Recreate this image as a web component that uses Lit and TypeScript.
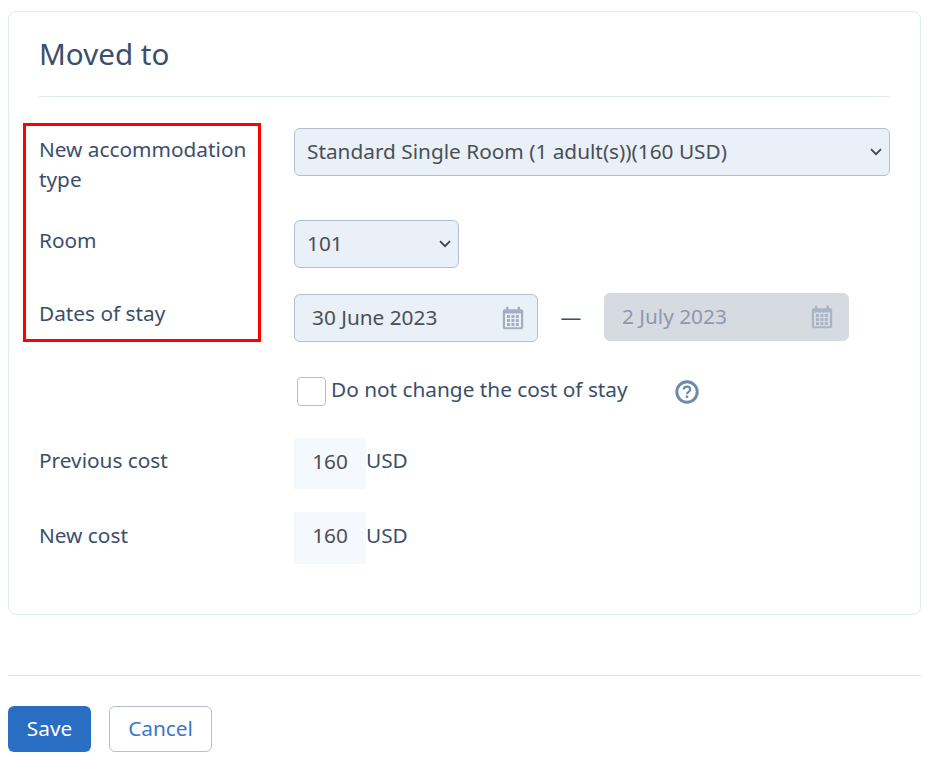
import { LitElement, html, css, svg } from "lit";
import { customElement } from "lit/decorators.js";

const chevron = html`<svg class="chev" width="12" height="8" viewBox="0 0 12 8"><path d="M1 1.2l5 5 5-5" fill="none" stroke="#3c4650" stroke-width="1.8"/></svg>`;
const cal = (c: string) => html`<svg class="cal" width="22" height="24" viewBox="0 0 22 24"><path fill="${c}" fill-rule="evenodd" d="M4 .8h2.4v2.4h9.2V.8H18v2.4h1.2A2 2 0 0 1 21.2 5.2v16a2 2 0 0 1-2 2H2.8a2 2 0 0 1-2-2v-16a2 2 0 0 1 2-2H4zM3 7.6v13.2a.4.4 0 0 0 .4.4h15.2a.4.4 0 0 0 .4-.4V7.6z"/>${svg`<g fill="${c}">${[9, 13, 17].flatMap((y) => [5, 9.4, 13.8].map((x) => svg`<rect x="${x}" y="${y}" width="3" height="3"/>`))}</g>`}</svg>`;

@customElement("app-root")
export class AppRoot extends LitElement {
  static styles = css`
    :host { display: block; font-family: "Noto Sans", sans-serif; font-size: 20.8px; line-height: 30px; color: #3b4f6b; height: 760px; overflow: hidden; padding: 11px 10px 0 8px; box-sizing: border-box; position: relative; }
    .card { border: 1px solid #e2eaf2; border-radius: 8px; height: 604px; box-sizing: border-box; padding: 0 30px; }
    h1 { margin: 0; font-weight: 400; font-size: 29.6px; line-height: 40px; padding: 22px 0 22px; border-bottom: 1px solid #e2eaf2; color: #3b4f6b; }
    .row { display: grid; grid-template-columns: 255px 1fr; }
    .label { width: 215px; }
    .r1 { margin-top: 31px; } .r1 .label { padding-top: 6px; }
    .r2 { margin-top: 26px; } .r2 .label { padding-top: 5px; }
    .r3 { margin-top: 26px; } .r3 .label { padding-top: 4px; }
    .r4 { margin-top: 34px; }
    .r5 { margin-top: 32px; } .r5 .label, .r5 .cur { padding-top: 7px; }
    .r6 { margin-top: 23px; } .r6 .label, .r6 .cur { padding-top: 8px; }
    .r6 .val { height: 52px; }
    .select, .date { box-sizing: border-box; height: 48px; padding-bottom: 2px; background: #e9f0f8; border: 1px solid #b3bfd1; border-radius: 6px; color: #4a4f55; display: flex; align-items: center; justify-content: space-between; }
    .select { padding-left: 12px; padding-right: 7px; }
    .room { width: 165px; }
    .dates { display: flex; align-items: flex-start; }
    .date { width: 244px; padding-left: 17px; padding-right: 13px; }
    .date.off { width: 245px; margin-top: -1px; padding-left: 17px; padding-right: 15px; background: #d6dbe2; border-color: #d6dbe2; color: #8c99ad; }
    .cal { position: relative; top: 1px; }
    .chev { position: relative; top: 1px; }
    .dash { width: 66px; text-align: center; line-height: 46px; color: #3b4f6b; }
    .check { display: flex; align-items: center; }
    .box { width: 29px; height: 29px; box-sizing: border-box; margin-left: 3px; border: 1px solid #b3bfd1; border-radius: 4px; background: #fff; }
    .check span { margin-left: 5px; position: relative; top: -2px; }
    .help { margin-left: 47px; margin-top: 2px; display: block; }
    .cost { display: flex; }
    .val { width: 72px; height: 51px; padding-bottom: 6px; box-sizing: border-box; background: #f5f8fc; color: #4a4f55; display: flex; align-items: center; justify-content: center; }
    .foot { border-top: 1px solid #dfe3e8; margin-top: 60px; padding-top: 30px; display: flex; gap: 18px; }
    .btn { box-sizing: border-box; height: 46px; padding-bottom: 2px; border-radius: 6px; display: flex; align-items: center; justify-content: center; }
    .save { width: 83px; background: #2a6ec3; color: #fff; }
    .cancel { width: 103px; border: 1px solid #b3bfd1; color: #3d78c4; background: #fff; }
    .mark { position: absolute; left: 23px; top: 123px; width: 238px; height: 219px; box-sizing: border-box; border: 3px solid #f00; }
  `;

  render() {
    return html`
      <div class="card">
        <h1>Moved to</h1>
        <div class="row r1"><div class="label">New accommodation type</div><div class="select"><span>Standard Single Room (1 adult(s))(160 USD)</span>${chevron}</div></div>
        <div class="row r2"><div class="label">Room</div><div class="select room"><span>101</span>${chevron}</div></div>
        <div class="row r3"><div class="label">Dates of stay</div><div class="dates"><div class="date"><span>30 June 2023</span>${cal("#a3afc1")}</div><div class="dash">—</div><div class="date off"><span>2 July 2023</span>${cal("#aab5c4")}</div></div></div>
        <div class="row r4"><div></div><div class="check"><div class="box"></div><span>Do not change the cost of stay</span>
          <svg class="help" width="24" height="24" viewBox="0 0 24 24"><circle cx="12" cy="12" r="10.2" fill="none" stroke="#6d8aa6" stroke-width="3"/><path d="M8.8 9.6c0-1.9 1.4-3 3.2-3s3.2 1.1 3.2 2.800c0 2.400-3.200 2.400-3.200 4.800" fill="none" stroke="#6d8aa6" stroke-width="2.200"/><rect x="10.800" y="15.600" width="2.400" height="2.400" fill="#6d8aa6"/></svg></div></div>
        <div class="row r5"><div class="label">Previous cost</div><div class="cost"><div class="val">160</div><div class="cur">USD</div></div></div>
        <div class="row r6"><div class="label">New cost</div><div class="cost"><div class="val">160</div><div class="cur">USD</div></div></div>
      </div>
      <div class="foot"><div class="btn save">Save</div><div class="btn cancel">Cancel</div></div>
      <div class="mark"></div>
    `;
  }
}
